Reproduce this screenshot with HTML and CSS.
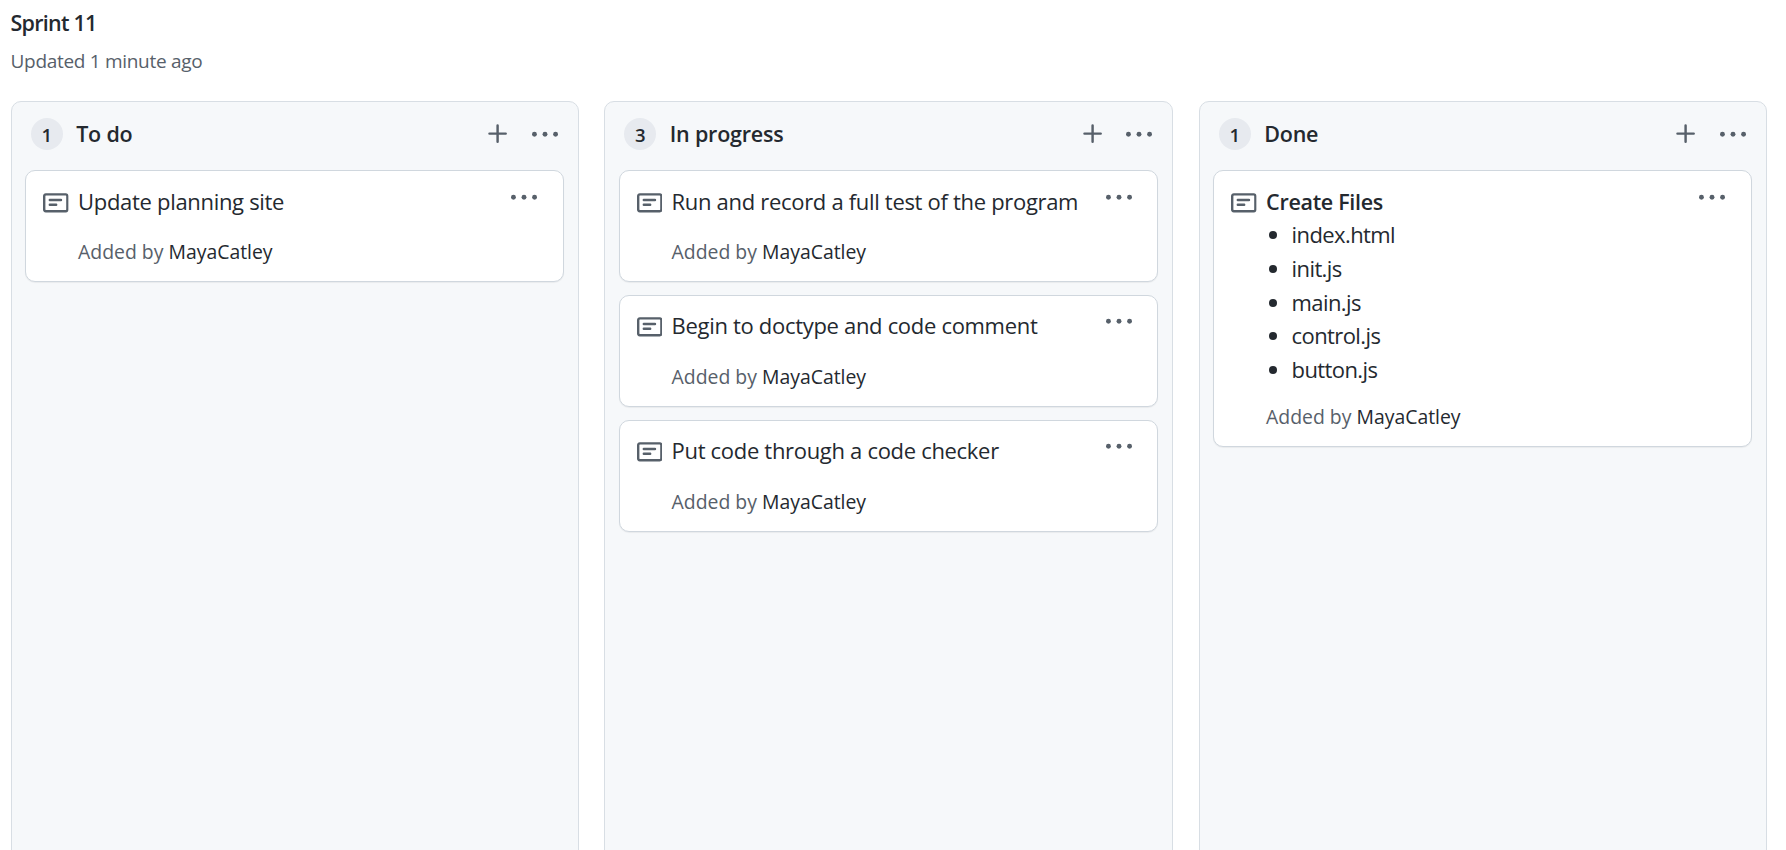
FILE: index.html
```
<!DOCTYPE html>
<html lang="en">
<head>
<meta charset="utf-8">
<title>Sprint 11</title>
<link rel="stylesheet" href="styles.css">
</head>
<body>
<svg class="sprite" aria-hidden="true">
  <symbol id="note" viewBox="0 0 16 16"><path fill-rule="evenodd" d="M0 3.75C0 2.784.784 2 1.75 2h12.5c.966 0 1.75.784 1.75 1.75v8.5A1.75 1.75 0 0114.25 14H1.75A1.75 1.75 0 010 12.25v-8.5zm1.75-.25a.25.25 0 00-.25.25v8.5c0 .138.112.25.25.25h12.5a.25.25 0 00.25-.25v-8.5a.25.25 0 00-.25-.25H1.75zM3.5 6.25a.75.75 0 01.75-.75h7a.75.75 0 010 1.5h-7a.75.75 0 01-.75-.75zm.75 2.25a.75.75 0 000 1.5h4a.75.75 0 000-1.5h-4z"/></symbol>
  <symbol id="plus" viewBox="0 0 16 16"><path d="M7.75 2a.75.75 0 01.75.75V7h4.25a.75.75 0 110 1.5H8.5v4.25a.75.75 0 11-1.5 0V8.5H2.75a.75.75 0 010-1.5H7V2.75A.75.75 0 017.75 2z"/></symbol>
  <symbol id="kebab" viewBox="0 0 16 16"><circle cx="1.5" cy="7.5" r="1.5"/><circle cx="8" cy="7.5" r="1.5"/><circle cx="14.5" cy="7.5" r="1.5"/></symbol>
</svg>
<header class="page-head">
  <h1 class="title"><span>Sprint 11</span></h1>
  <p class="updated"><span>Updated 1 minute ago</span></p>
</header>
<main class="board">
  <section class="column">
    <div class="column-head">
      <span class="count">1</span><h2 class="name">To do</h2>
      <svg class="icon plus"><use href="#plus"/></svg><svg class="icon kebab"><use href="#kebab"/></svg>
    </div>
    <article class="card">
      <svg class="icon note"><use href="#note"/></svg>
      <div class="body"><p class="text">Update planning site</p><p class="by">Added by <a class="user">MayaCatley</a></p></div>
      <svg class="icon kebab"><use href="#kebab"/></svg>
    </article>
  </section>
  <section class="column">
    <div class="column-head">
      <span class="count">3</span><h2 class="name">In progress</h2>
      <svg class="icon plus"><use href="#plus"/></svg><svg class="icon kebab"><use href="#kebab"/></svg>
    </div>
    <article class="card">
      <svg class="icon note"><use href="#note"/></svg>
      <div class="body"><p class="text">Run and record a full test of the program</p><p class="by">Added by <a class="user">MayaCatley</a></p></div>
      <svg class="icon kebab"><use href="#kebab"/></svg>
    </article>
    <article class="card">
      <svg class="icon note"><use href="#note"/></svg>
      <div class="body"><p class="text">Begin to doctype and code comment</p><p class="by">Added by <a class="user">MayaCatley</a></p></div>
      <svg class="icon kebab"><use href="#kebab"/></svg>
    </article>
    <article class="card">
      <svg class="icon note"><use href="#note"/></svg>
      <div class="body"><p class="text">Put code through a code checker</p><p class="by">Added by <a class="user">MayaCatley</a></p></div>
      <svg class="icon kebab"><use href="#kebab"/></svg>
    </article>
  </section>
  <section class="column">
    <div class="column-head">
      <span class="count">1</span><h2 class="name">Done</h2>
      <svg class="icon plus"><use href="#plus"/></svg><svg class="icon kebab"><use href="#kebab"/></svg>
    </div>
    <article class="card">
      <svg class="icon note"><use href="#note"/></svg>
      <div class="body">
        <p class="text strong">Create Files</p>
        <ul class="files"><li>index.html</li><li>init.js</li><li>main.js</li><li>control.js</li><li>button.js</li></ul>
        <p class="by tight">Added by <a class="user">MayaCatley</a></p>
      </div>
      <svg class="icon kebab"><use href="#kebab"/></svg>
    </article>
  </section>
</main>
</body>
</html>
```
FILE: styles.css
```
* { box-sizing: border-box; }
body {
  margin: 0;
  height: 850px;
  overflow: hidden;
  display: flex;
  flex-direction: column;
  background: #fff;
  color: #24292f;
  font-family: "Open Sans", "Noto Sans", sans-serif;
  font-size: 22px;
  line-height: 33.7px;
}
h1, h2, p, ul { margin: 0; padding: 0; font-size: inherit; font-weight: inherit; }
.sprite { display: none; }
.icon { flex: none; display: block; width: 26px; height: 26px; fill: #57606a; }
.page-head { flex: none; height: 101px; padding: 6px 0 0 10.5px; white-space: nowrap; }
.title { font-weight: 600; font-size: 21.5px; letter-spacing: -0.75px; }
.updated { margin-top: 7.5px; font-size: 19px; line-height: 28.8px; letter-spacing: -0.3px; color: #57606a; }
.board {
  flex: none;
  height: 780px;
  padding-left: 10.9px;
  display: grid;
  grid-template-columns: 568px 569px 568px;
  column-gap: 25.5px;
}
.column {
  padding: 0 14px 0 13.3px;
  display: flex;
  flex-direction: column;
  gap: 13px;
  background: #f6f8fa;
  border: 1px solid #d8dee4;
  border-radius: 10px;
}
.column-head { flex: none; height: 55px; padding: 9px 6px 0 5.7px; display: flex; align-items: center; }
.count {
  flex: none;
  width: 32px;
  height: 32px;
  border-radius: 50%;
  background: #e7eaef;
  font-size: 18.5px;
  font-weight: 600;
  line-height: 34px;
  text-align: center;
}
.name { flex: 1; margin-left: 13.3px; font-weight: 600; font-size: 21.5px; letter-spacing: -0.2px; }
.column-head .plus { margin-right: 20.5px; }
.column-head .kebab { margin-top: 1px; }
.card {
  flex: none;
  display: flex;
  align-items: flex-start;
  padding: 13.5px 17px 14.5px;
  background: #fff;
  border: 1px solid #d0d7de;
  border-radius: 10px;
  box-shadow: 0 1px 1px rgba(27, 31, 36, 0.06);
}
.card .kebab { margin: 0 8.5px 0 0; }
.note { margin-top: 5px; width: 25.6px; height: 25.6px; }
.body { flex: 1; padding-left: 9.3px; white-space: nowrap; }
.text { letter-spacing: -0.31px; }
.strong { font-weight: 600; font-size: 21.5px; letter-spacing: -0.3px; }
.by { margin-top: 19.6px; font-size: 19.4px; line-height: 28.6px; color: #57606a; }
.by.tight { margin-top: 16px; }
.user { color: #24292f; }
.files { padding-left: 25.5px; letter-spacing: -0.6px; }
```
